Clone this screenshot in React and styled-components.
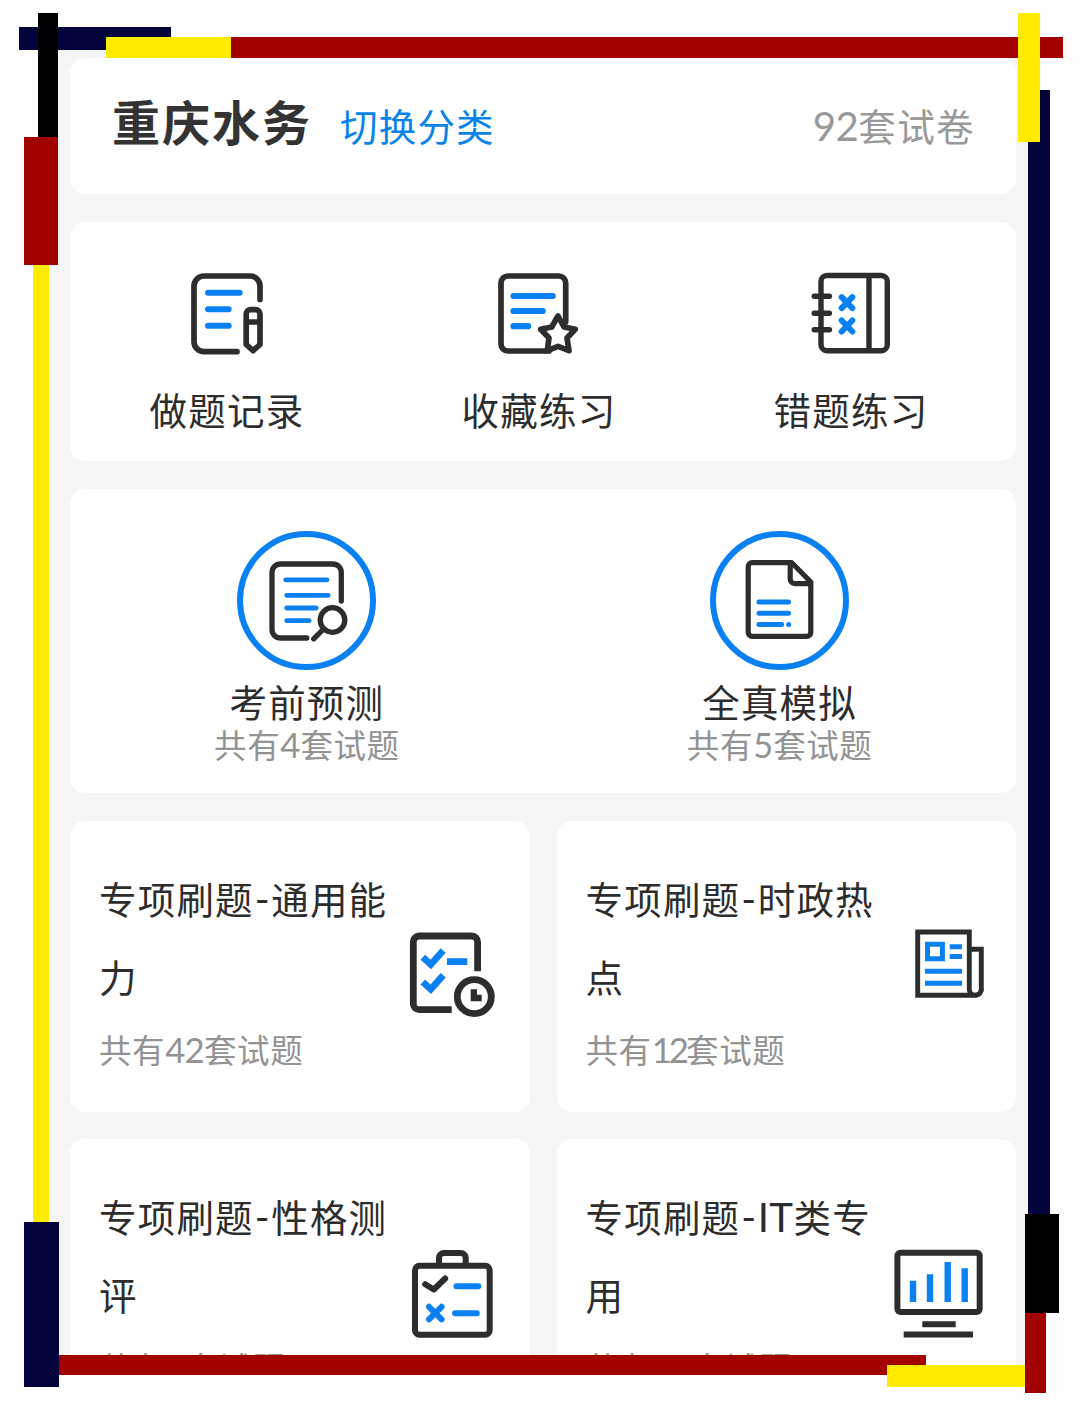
import React from 'react';
import styled, { createGlobalStyle } from 'styled-components';

const DARK = '#2d2d2d';
const BLUE = '#0a81f2';

const GlobalStyle = createGlobalStyle`
  body {
    margin: 0;
    background: #fff;
    color: ${DARK};
    font-family: "Noto Sans CJK SC", "Noto Sans", sans-serif;
  }
  * {
    box-sizing: border-box;
  }
`;
const Page = styled.div`
  position: relative;
  width: 1080px;
  height: 1417px;
  padding: 50px 52px 52px 49px;
  background: #fefefe;
  overflow: hidden;
`;
const Screen = styled.main`
  display: flex;
  flex-direction: column;
  gap: 27.8px;
  height: 1315px;
  padding: 8px 12px 0 21px;
  background: #f5f5f5;
  overflow: hidden;
`;
const Card = styled.section`
  flex-shrink: 0;
  height: ${props => props.$height}px;
  background: #fff;
  border-radius: 15px;
`;
const Header = styled(Card)`
  display: flex;
  align-items: baseline;
  padding: 27px 41px 0 42px;
`;
const Title = styled.h1`
  margin: 0 28px 0 0;
  font-size: 48px;
  line-height: 70px;
  font-weight: 700;
  letter-spacing: 2px;
  color: #333;
`;
const SwitchLink = styled.a`
  font-size: 37.5px;
  letter-spacing: 1.2px;
  color: #0a83e8;
  cursor: pointer;
`;
const PaperCount = styled.span`
  margin-left: auto;
  font-size: 37.5px;
  letter-spacing: 1.4px;
  color: #999;
`;
const Shortcuts = styled(Card)`
  display: grid;
  grid-template-columns: repeat(3, 312px);
  padding: 43px 0 0 1px;
`;
const Exams = styled(Card)`
  display: grid;
  grid-template-columns: repeat(2, 1fr);
  padding: 42px 0 0 0.5px;
`;
const Item = styled.div`
  display: flex;
  flex-direction: column;
  align-items: center;
`;
const Label = styled.div`
  margin-top: ${props => props.$gap}px;
  font-size: 37.5px;
  line-height: 46px;
  letter-spacing: 1.2px;
`;
const Count = styled.div`
  font-size: 32.5px;
  line-height: 40px;
  letter-spacing: 0.6px;
  color: #939393;
`;
const Latin = styled.span`
  font-family: Lato, sans-serif;
  font-size: 1.07em;
  line-height: 1;
  letter-spacing: ${props => props.$spacing || 0}px;
`;
const Ring = styled.div`
  display: flex;
  align-items: center;
  justify-content: center;
  width: 139px;
  height: 139px;
  padding: 0 1px 2px 0;
  border: 6px solid ${BLUE};
  border-radius: 50%;
`;
const Topics = styled.div`
  display: grid;
  grid-template-columns: repeat(2, 1fr);
  gap: 27.5px 27px;
`;
const Topic = styled(Card)`
  display: flex;
  justify-content: space-between;
  padding: 38px 30px 0 29px;
`;
const TopicText = styled.div`
  width: 300px;
`;
const TopicName = styled.div`
  font-size: 37.5px;
  line-height: 78px;
  letter-spacing: 1.2px;
`;
const Dash = styled(Latin)`
  padding: 0 1.5px 0 1px;
`;
const TopicCount = styled(Count)`
  line-height: 68px;
`;
const TopicIcon = styled.div`
  margin-top: 70px;
  height: 94px;
`;
const Svg = styled.svg`
  display: block;
  flex-shrink: 0;
  fill: none;
  stroke: ${DARK};
  stroke-linecap: ${props => props.$cap || 'round'};
  stroke-linejoin: ${props => props.$join || 'round'};
`;
const Blue = styled.g`
  stroke: ${BLUE};
`;
const Strip = styled.div`
  position: absolute;
  left: ${props => props.$x}px;
  top: ${props => props.$y}px;
  width: ${props => props.$w}px;
  height: ${props => props.$h}px;
  background: ${props => props.$color};
`;

const RecordIcon = () => (
  <Svg width="96" height="96" viewBox="0 0 96 96" strokeWidth="5.7">
    <path d="M81 34.5V21a10 10 0 0 0-10-10H25a10 10 0 0 0-10 10v55.7a10 10 0 0 0 10 10h33" />
    <path d="M67.2 79.5V49a4.3 4.3 0 0 1 4.3-4.3h5.2A4.3 4.3 0 0 1 81 49v30.5l-6.9 6.2zM67.2 57H81" />
    <Blue strokeWidth="6">
      <path d="M29 27.8h31.7M29 44.3h20.7M29 60.8h20.7" />
    </Blue>
  </Svg>
);

const StarIcon = () => (
  <Svg width="96" height="96" viewBox="0 0 96 96" strokeWidth="5.7">
    <path d="M74.7 57V18a7 7 0 0 0-7-7H17a7 7 0 0 0-7 7v61a7 7 0 0 0 7 7h41" />
    <path d="M67 51l6 11 11.3 2.3L76 73l2 12.7-11-4.4-10.7 4.4L58 73l-8.3-8.7 11-2.3z" fill="#fff" />
    <Blue strokeWidth="6.2">
      <path d="M22.5 31h39.2M22.5 46h29.2M22.5 61.2h14.6" />
    </Blue>
  </Svg>
);

const WrongBookIcon = () => (
  <Svg width="96" height="96" viewBox="0 0 96 96" strokeWidth="5.4">
    <rect x="18" y="10.5" width="66.3" height="75.2" rx="6" />
    <path d="M66 11v74M11.2 31.2h15.2M11.2 48.3h15.2M11.2 64.8h15.2" />
    <Blue strokeWidth="6">
      <path d="M38.7 32.2l10.6 11M49.3 32.2l-10.6 11M38.7 55.5l10.6 11M49.3 55.5l-10.6 11" />
    </Blue>
  </Svg>
);

const ForecastIcon = () => (
  <Svg width="90" height="90" viewBox="0 0 90 90" strokeWidth="5.3">
    <path d="M80.3 46V17.5A8.5 8.5 0 0 0 71.8 9H19.5a8.5 8.5 0 0 0-8.5 8.5v57a8.5 8.5 0 0 0 8.5 8.5h26.3" />
    <circle cx="71.5" cy="65" r="12.3" />
    <path d="M62 74.5l-9.3 9.3" />
    <Blue strokeWidth="4.8">
      <path d="M24.7 24.8H66M25.7 40.3h41.5M25.7 53h29.5M25.7 65.7h22.5" />
    </Blue>
  </Svg>
);

const MockIcon = () => (
  <Svg width="90" height="90" viewBox="0 0 90 90" strokeWidth="5.2">
    <path d="M57.8 7.7H18.2a4 4 0 0 0-4 4v65.6a4 4 0 0 0 4 4h54.6a4 4 0 0 0 4-4V27z" />
    <path d="M56.2 9v15a4.6 4.6 0 0 0 4.6 4.6H76" />
    <Blue strokeWidth="5">
      <path d="M25 47h29.5M25 58.3h29.5M25 69.4h22.6M54.6 69.4h.1" />
    </Blue>
  </Svg>
);

const GeneralIcon = () => (
  <Svg width="94" height="94" viewBox="0 0 94 94" strokeWidth="6.8" $cap="butt" $join="miter">
    <path d="M71.6 42.3V13a6 6 0 0 0-6-6H13.3a6 6 0 0 0-6 6v61.7a6 6 0 0 0 6 6h32.4" />
    <circle cx="68.3" cy="67.7" r="17" />
    <path d="M64.7 60.3H71v5.5h4.7v6.5h-11z" fill={DARK} stroke="none" />
    <Blue>
      <path d="M16.8 28.3l8 7.2 12.4-14M16.8 53l8 7.2 12.4-14M41 32.7h20.3" />
    </Blue>
  </Svg>
);

const NewsIcon = () => (
  <Svg width="94" height="94" viewBox="0 0 94 94" strokeWidth="4.9" $cap="butt" $join="miter">
    <path d="M83.3 66.3H25.7V3h51.6v57.3a6 6 0 0 0 12 0V20.2h-12" />
    <path d="M83.3 66.3a6 6 0 0 0 6-6" />
    <Blue strokeWidth="5">
      <path d="M35.5 15.2h14.9v14.5H35.5zM57.7 17.8H70M57.7 27.6H70M33 42.2h37M33 54.2h37" />
    </Blue>
  </Svg>
);

const PersonalityIcon = () => (
  <Svg width="94" height="94" viewBox="0 0 94 94" strokeWidth="6">
    <rect x="9" y="18.7" width="74.7" height="69" rx="4.5" />
    <path d="M33 18V11a5 5 0 0 1 5-5h16.7a5 5 0 0 1 5 5v7M19.2 37.2l8.6 5.3 11.4-11" />
    <Blue>
      <path d="M23 59.8l12.6 12.6M35.6 59.8L23 72.4M50.5 39.3h21.8M49 66.2h21.8" />
    </Blue>
  </Svg>
);

const MonitorIcon = () => (
  <Svg width="94" height="94" viewBox="0 0 94 94" strokeWidth="6" $cap="butt">
    <rect x="5.4" y="5.7" width="82.3" height="59.3" rx="3" />
    <path d="M30.3 77.3h33.4M11.7 87.6H81" />
    <Blue strokeWidth="6.4">
      <path d="M21 33.7V55M38 27.3V55M55.7 15v40M72.7 21.3V55" />
    </Blue>
  </Svg>
);

const shortcuts = [
  { label: '做题记录', Icon: RecordIcon },
  { label: '收藏练习', Icon: StarIcon },
  { label: '错题练习', Icon: WrongBookIcon },
];

const exams = [
  { label: '考前预测', count: 4, Icon: ForecastIcon },
  { label: '全真模拟', count: 5, Icon: MockIcon },
];

const topics = [
  { name: '通用能力', count: 42, spacing: -0.8, Icon: GeneralIcon },
  { name: '时政热点', count: 12, spacing: -3, Icon: NewsIcon },
  { name: '性格测评', count: 4, Icon: PersonalityIcon },
  { latin: 'IT', name: '类专用', count: 11, Icon: MonitorIcon },
];

const RED = '#a30000';
const YELLOW = '#ffeb00';
const NAVY = '#04043c';

// x, y, width, height, color; later strips lie over earlier ones
const strips = [
  [19, 27, 152, 23, NAVY],
  [37.5, 13, 20.5, 124, '#000'],
  [106, 37, 125, 21, YELLOW],
  [231, 37, 832, 21, RED],
  [1028, 89.5, 22, 1125, NAVY],
  [1018, 13, 22, 129, YELLOW],
  [33, 265, 16, 957, YELLOW],
  [24, 137, 34, 128, RED],
  [59, 1355, 867, 20, RED],
  [24, 1222, 35, 165, NAVY],
  [887, 1365, 138, 21.5, YELLOW],
  [1025, 1312, 21, 81, RED],
  [1025, 1214, 34, 98.5, '#000'],
];

const App = () => (
  <Page>
    <GlobalStyle />
    <Screen>
      <Header as="header" $height={136}>
        <Title>重庆水务</Title>
        <SwitchLink>切换分类</SwitchLink>
        <PaperCount><Latin $spacing={-0.5}>92</Latin>套试卷</PaperCount>
      </Header>
      <Shortcuts $height={239.5}>
        {shortcuts.map(({ label, Icon }) => (
          <Item key={label}>
            <Icon />
            <Label $gap={25.5}>{label}</Label>
          </Item>
        ))}
      </Shortcuts>
      <Exams $height={304}>
        {exams.map(({ label, count, Icon }) => (
          <Item key={label}>
            <Ring><Icon /></Ring>
            <Label $gap={8}>{label}</Label>
            <Count>共有<Latin>{count}</Latin>套试题</Count>
          </Item>
        ))}
      </Exams>
      <Topics>
        {topics.map(({ latin, name, count, spacing, Icon }) => (
          <Topic key={name} $height={291}>
            <TopicText>
              <TopicName>专项刷题<Dash>-</Dash>{latin && <Latin $spacing={0.4}>{latin}</Latin>}{name}</TopicName>
              <TopicCount>共有<Latin $spacing={spacing}>{count}</Latin>套试题</TopicCount>
            </TopicText>
            <TopicIcon><Icon /></TopicIcon>
          </Topic>
        ))}
      </Topics>
    </Screen>
    {strips.map(([x, y, w, h, color]) => (
      <Strip key={`${x}-${y}`} $x={x} $y={y} $w={w} $h={h} $color={color} />
    ))}
  </Page>
);

export default App;
